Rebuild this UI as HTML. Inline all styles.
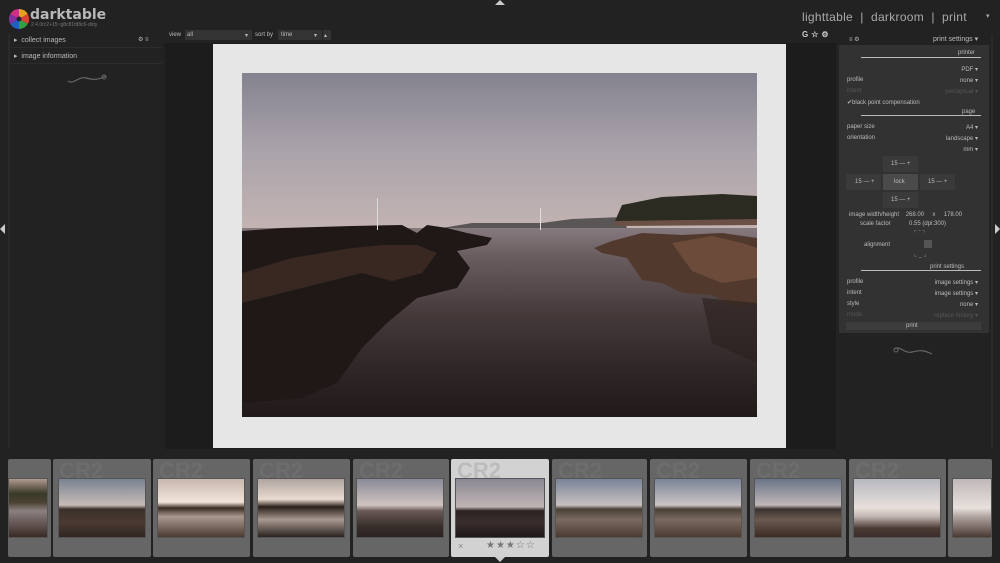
<!DOCTYPE html>
<html><head><meta charset="utf-8"><style>
*{margin:0;padding:0;box-sizing:border-box}
body{width:1000px;height:563px;background:#222;font-family:"Liberation Sans","DejaVu Sans",sans-serif;color:#aaa;position:relative;overflow:hidden}
.a{position:absolute}
.t{font-size:6px;color:#bbb;white-space:nowrap}
.r{text-align:right}
.thumb{position:absolute;top:459px;height:98px;background:#666;border-radius:2px}
.thumb .cr{position:absolute;left:6px;top:-1px;font:bold 22px "Liberation Sans",sans-serif;color:#6d6d6d}
.thumb .im{position:absolute;top:19px;height:60px;border:1px solid #555}
</style></head><body>
<div class="a" style="left:495px;top:0;width:0;height:0;border-left:5px solid transparent;border-right:5px solid transparent;border-bottom:5px solid #ccc"></div>
<svg class="a" style="left:9px;top:9px" width="20" height="20" viewBox="0 0 20 20">
<path d="M10 10L10 0A10 10 0 0 1 18.7 5Z" fill="#e8a020"/><path d="M10 10L18.7 5A10 10 0 0 1 18.7 15Z" fill="#e04030"/>
<path d="M10 10L18.7 15A10 10 0 0 1 10 20Z" fill="#30a040"/><path d="M10 10L10 20A10 10 0 0 1 1.3 15Z" fill="#2060c0"/>
<path d="M10 10L1.3 15A10 10 0 0 1 1.3 5Z" fill="#8030a0"/><path d="M10 10L1.3 5A10 10 0 0 1 10 0Z" fill="#d03080"/>
<circle cx="10" cy="10" r="2.5" fill="#222"/></svg>
<div class="a" style="left:30px;top:7px;font:bold 14px 'DejaVu Sans',sans-serif;color:#b8b8b8">darktable</div>
<div class="a" style="left:31px;top:22px;font-size:5px;color:#777">2.4.0rc2+15~g8c81fd8c6-dirty</div>
<div class="a" style="left:802px;top:10px;font-size:12px;color:#aaa;letter-spacing:.3px">lighttable &nbsp;|&nbsp; darkroom &nbsp;|&nbsp; print</div>
<div class="a" style="left:986px;top:12px;font-size:7px;color:#aaa">▾</div>
<div class="a" style="left:8px;top:34px;width:2px;height:414px;background:#2a2a2a"></div>
<div class="a t" style="left:14px;top:36px;font-size:7px">▸ &nbsp;collect images</div>
<div class="a t" style="left:138px;top:36px">⚙ ≡</div>
<div class="a" style="left:12px;top:47px;width:150px;height:1px;background:#2c2c2c"></div>
<div class="a t" style="left:14px;top:52px;font-size:7px">▸ &nbsp;image information</div>
<div class="a" style="left:12px;top:63px;width:150px;height:1px;background:#2c2c2c"></div>
<svg class="a" style="left:66px;top:73px" width="42" height="12"><path d="M2 8C8 12 12 3 20 5S32 7 40 3" stroke="#666" fill="none" stroke-width="1.2"/><circle cx="38" cy="4" r="2" stroke="#666" fill="none"/></svg>
<div class="a" style="left:165px;top:43px;width:671px;height:406px;background:#1c1c1c"></div>
<div class="a t" style="left:169px;top:32px">view</div>
<div class="a" style="left:185px;top:30px;width:67px;height:10px;background:#333"></div>
<div class="a t" style="left:187px;top:32px">all</div><div class="a t" style="left:245px;top:32px">▾</div>
<div class="a t" style="left:255px;top:32px">sort by</div>
<div class="a" style="left:278px;top:30px;width:44px;height:10px;background:#333"></div>
<div class="a t" style="left:281px;top:32px">time</div><div class="a t" style="left:314px;top:32px">▾</div>
<div class="a" style="left:323px;top:30px;width:8px;height:10px;background:#333"></div><div class="a t" style="left:324px;top:32px">▴</div>
<div class="a" style="left:213px;top:44px;width:573px;height:404px;background:#e6e6e6"></div>
<svg class="a" style="left:242px;top:73px" width="515" height="344" viewBox="0 0 515 344">
<defs>
<linearGradient id="sky" x1="0" y1="0" x2="0" y2="1"><stop offset="0" stop-color="#858390"/><stop offset=".5" stop-color="#aaa3ab"/><stop offset="1" stop-color="#c4b4b2"/></linearGradient>
<linearGradient id="wat" x1="0" y1="0" x2="0" y2="1"><stop offset="0" stop-color="#857a7e"/><stop offset=".15" stop-color="#6a5d60"/><stop offset=".45" stop-color="#463a3b"/><stop offset=".75" stop-color="#2f2626"/><stop offset="1" stop-color="#201a19"/></linearGradient>
</defs>
<rect width="515" height="158" fill="url(#sky)"/>
<rect y="155" width="515" height="189" fill="url(#wat)"/>
<path d="M200 155L230 150L300 150L330 146L380 144L385 155Z" fill="#5a5656"/>
<path d="M373 148L380 132L420 124L480 121L515 123L515 150L373 152Z" fill="#2c2b22"/>
<path d="M373 148L515 146L515 152L373 153Z" fill="#6b5045"/>
<path d="M0 158L40 155L110 153L160 152L175 160L185 152L205 155L225 160L250 165L245 172L215 178L228 195L215 215L175 225L145 250L120 275L95 310L60 325L0 330Z" fill="#1f1816"/>
<path d="M0 200L50 185L110 175L140 172L175 172L195 180L180 200L150 208L120 200L80 210L40 220L0 230Z" fill="#3e2d24" opacity=".8"/>
<path d="M352 175L370 168L400 160L440 162L480 160L515 165L515 230L495 235L470 222L440 220L420 210L400 207L385 185L360 180Z" fill="#513a2d"/>
<path d="M430 170L470 163L500 170L515 175L515 205L480 210L450 198Z" fill="#775240" opacity=".7"/>
<path d="M460 225L515 230L515 290L470 270Z" fill="#2a201c" opacity=".6"/>
<rect x="135" y="125" width="1" height="32" fill="#ddd"/><rect x="298" y="135" width="1" height="22" fill="#ddd"/>
</svg>
<div class="a" style="left:802px;top:30px;font:bold 8px sans-serif;color:#ccc;letter-spacing:3px">G☆⚙</div>
<div class="a t" style="left:849px;top:36px">≡ ⚙</div>
<div class="a t" style="left:933px;top:35px;font-size:7px">print settings ▾</div>
<div class="a" style="left:839px;top:45px;width:150px;height:288px;background:#323232"></div>
<div class="a t" style="left:958px;top:50px">printer</div>
<div class="a" style="left:861px;top:57px;width:120px;height:1px;background:#bbb"></div>
<div class="a t r" style="left:900px;top:66px;width:78px">PDF ▾</div>
<div class="a t" style="left:847px;top:77px">profile</div><div class="a t r" style="left:900px;top:77px;width:78px">none ▾</div>
<div class="a t" style="left:847px;top:88px;color:#555">intent</div><div class="a t r" style="left:900px;top:88px;width:78px;color:#555">perceptual ▾</div>
<div class="a t" style="left:847px;top:99px">✔black point compensation</div>
<div class="a t" style="left:962px;top:109px">page</div>
<div class="a" style="left:861px;top:115px;width:120px;height:1px;background:#bbb"></div>
<div class="a t" style="left:847px;top:124px">paper size</div><div class="a t r" style="left:900px;top:124px;width:78px">A4 ▾</div>
<div class="a t" style="left:847px;top:135px">orientation</div><div class="a t r" style="left:900px;top:135px;width:78px">landscape ▾</div>
<div class="a t r" style="left:900px;top:146px;width:78px">mm ▾</div>
<div class="a" style="left:883px;top:156px;width:35px;height:16px;background:#3a3a3a"></div><div class="a t" style="left:891px;top:161px">15 — +</div>
<div class="a" style="left:846px;top:174px;width:35px;height:16px;background:#3a3a3a"></div><div class="a t" style="left:855px;top:179px">15 — +</div>
<div class="a" style="left:883px;top:174px;width:35px;height:16px;background:#4a4a4a"></div><div class="a t" style="left:894px;top:179px">lock</div>
<div class="a" style="left:920px;top:174px;width:35px;height:16px;background:#3a3a3a"></div><div class="a t" style="left:928px;top:179px">15 — +</div>
<div class="a" style="left:883px;top:192px;width:35px;height:16px;background:#3a3a3a"></div><div class="a t" style="left:891px;top:197px">15 — +</div>
<div class="a t" style="left:849px;top:212px">image width/height &nbsp; &nbsp;268.00 &nbsp; &nbsp; x &nbsp; &nbsp; 178.00</div>
<div class="a t" style="left:860px;top:221px">scale factor &nbsp; &nbsp; &nbsp; &nbsp; &nbsp; 0.55 (dpi:300)</div>
<div class="a t" style="left:864px;top:242px">alignment</div>
<div class="a" style="left:924px;top:240px;width:8px;height:8px;background:#555"></div>
<div class="a t" style="left:914px;top:230px;color:#999">⌜ ‾ ⌝</div>
<div class="a t" style="left:914px;top:251px;color:#999">⌞ _ ⌟</div>
<div class="a t" style="left:930px;top:264px">print settings</div>
<div class="a" style="left:861px;top:270px;width:120px;height:1px;background:#bbb"></div>
<div class="a t" style="left:847px;top:279px">profile</div><div class="a t r" style="left:900px;top:279px;width:78px">image settings ▾</div>
<div class="a t" style="left:847px;top:290px">intent</div><div class="a t r" style="left:900px;top:290px;width:78px">image settings ▾</div>
<div class="a t" style="left:847px;top:301px">style</div><div class="a t r" style="left:900px;top:301px;width:78px">none ▾</div>
<div class="a t" style="left:847px;top:312px;color:#555">mode</div><div class="a t r" style="left:900px;top:312px;width:78px;color:#555">replace history ▾</div>
<div class="a" style="left:846px;top:322px;width:135px;height:8px;background:#3c3c3c"></div><div class="a t" style="left:906px;top:323px">print</div>
<svg class="a" style="left:892px;top:345px" width="42" height="12"><path d="M2 4C8 0 12 9 20 7S32 5 40 9" stroke="#666" fill="none" stroke-width="1.2"/><circle cx="4" cy="5" r="2" stroke="#666" fill="none"/></svg>
<div class="a" style="left:991px;top:34px;width:2px;height:414px;background:#2a2a2a"></div>
<div class="a" style="left:0;top:224px;border-top:5px solid transparent;border-bottom:5px solid transparent;border-right:5px solid #ccc"></div>
<div class="a" style="left:995px;top:224px;border-top:5px solid transparent;border-bottom:5px solid transparent;border-left:5px solid #ccc"></div>
<div class="thumb" style="left:8px;width:43px"><div class="im" style="left:0;width:40px;background:linear-gradient(#b09a90 0,#3a3a28 25%,#4a4030 40%,#8a8080 55%,#3a2a25 100%)"></div></div>
<div class="thumb" style="left:53px;width:98px"><div class="cr">CR2</div><div class="im" style="left:5px;width:88px;background:linear-gradient(#7a8290,#c8bcb8 45%,#3a302a 52%,#4a3a32 75%,#302622)"></div></div>
<div class="thumb" style="left:153px;width:97px"><div class="cr">CR2</div><div class="im" style="left:4px;width:88px;background:linear-gradient(#c8b8b0,#f0e4d8 40%,#3a2c22 50%,#a89890 65%,#4a3a32)"></div></div>
<div class="thumb" style="left:253px;width:97px"><div class="cr">CR2</div><div class="im" style="left:4px;width:88px;background:linear-gradient(#b0a4a0,#eadcd0 35%,#2a201a 48%,#a89890 70%,#2a221e)"></div></div>
<div class="thumb" style="left:353px;width:96px"><div class="cr">CR2</div><div class="im" style="left:3px;width:88px;background:linear-gradient(#8a8a98,#d0c4c0 45%,#6a5a56 55%,#3a302c 80%,#2a2220)"></div></div>
<div class="thumb" style="left:451px;width:98px;background:#d2d2d2"><div class="cr" style="color:#bcbcbc">CR2</div><div class="im" style="left:4px;width:90px;background:linear-gradient(#8a8892,#c0b4b4 48%,#2a2220 55%,#3a2e2c 75%,#1e1818)"></div>
<div class="a" style="left:7px;top:82px;font-size:9px;color:#888">×</div><div class="a" style="left:35px;top:81px;font-size:10px;color:#777;letter-spacing:1px">★★★☆☆</div></div>
<div class="thumb" style="left:552px;width:95px"><div class="cr">CR2</div><div class="im" style="left:3px;width:88px;background:linear-gradient(#7a8498,#c8c0c0 45%,#4a4036 52%,#7a6a60 70%,#4a3a30)"></div></div>
<div class="thumb" style="left:650px;width:97px"><div class="cr">CR2</div><div class="im" style="left:4px;width:88px;background:linear-gradient(#7a8498,#ccc4c4 45%,#4a4036 52%,#7a6a60 70%,#4a3a30)"></div></div>
<div class="thumb" style="left:750px;width:96px"><div class="cr">CR2</div><div class="im" style="left:4px;width:88px;background:linear-gradient(#6a7488,#c0b8b8 45%,#3a3230 52%,#6a5a50 70%,#3a2a22)"></div></div>
<div class="thumb" style="left:849px;width:97px"><div class="cr">CR2</div><div class="im" style="left:4px;width:88px;background:linear-gradient(#b8b8c0,#e8e0dc 50%,#c0b4b0 65%,#4a3a34 85%,#3a2e2a)"></div></div>
<div class="thumb" style="left:948px;width:44px"><div class="im" style="left:4px;width:40px;background:linear-gradient(#c0b8b8,#e8e0dc 50%,#b0a4a0 65%,#4a3a34)"></div></div>
<div class="a" style="left:495px;top:557px;border-left:5px solid transparent;border-right:5px solid transparent;border-top:5px solid #ccc"></div>
</body></html>
